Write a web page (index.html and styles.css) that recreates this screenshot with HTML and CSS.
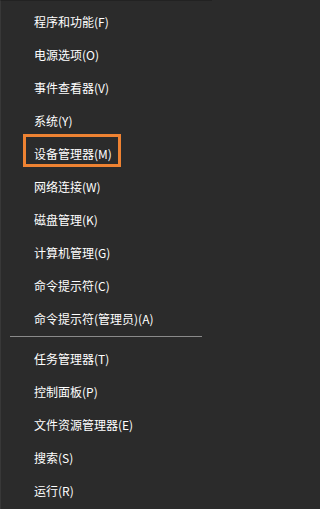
FILE: index.html
```html
<!DOCTYPE html>
<html lang="zh-CN">
<head>
<meta charset="utf-8">
<title>Win+X 菜单</title>
<link rel="stylesheet" href="styles.css">
</head>
<body>
<div class="menu">
  <div class="item">程序和功能(F)</div>
  <div class="item">电源选项(O)</div>
  <div class="item">事件查看器(V)</div>
  <div class="item">系统(Y)</div>
  <div class="item highlighted">设备管理器(M)<span class="mark"></span></div>
  <div class="item">网络连接(W)</div>
  <div class="item">磁盘管理(K)</div>
  <div class="item">计算机管理(G)</div>
  <div class="item">命令提示符(C)</div>
  <div class="item">命令提示符(管理员)(A)</div>
  <div class="sep"></div>
  <div class="item">任务管理器(T)</div>
  <div class="item">控制面板(P)</div>
  <div class="item">文件资源管理器(E)</div>
  <div class="item">搜索(S)</div>
  <div class="item">运行(R)</div>
</div>
</body>
</html>
```
FILE: styles.css
```css
html, body {
  margin: 0;
  padding: 0;
  background: #2b2b2b;
}
.menu {
  box-sizing: border-box;
  width: 212px;
  height: 509px;
  background: #2b2b2b;
  border-left: 1px solid #383838;
  border-top: 1px solid #222222;
  padding-top: 4px;
  display: flex;
  flex-direction: column;
  font-family: "Noto Sans CJK SC", "Noto Sans", sans-serif;
  font-size: 12px;
  color: #ffffff;
}
.item {
  position: relative;
  height: 33px;
  line-height: 33px;
  padding-left: 33px;
  white-space: nowrap;
}
.sep {
  height: 1px;
  margin: 1px 10px 5px 9px;
  background: #8a8a8a;
}
.mark {
  position: absolute;
  left: 22px;
  top: -3px;
  width: 98px;
  height: 33px;
  box-sizing: border-box;
  border: 3px solid #ee8232;
}
```
